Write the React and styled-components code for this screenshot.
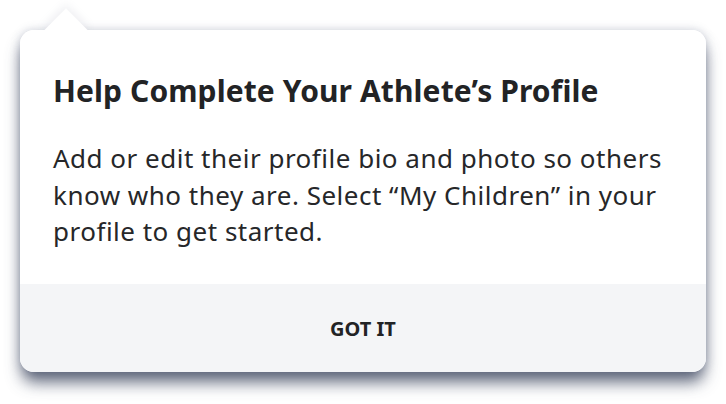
import React from 'react';
import styled, { createGlobalStyle } from 'styled-components';

const GlobalStyle = createGlobalStyle`
  html, body {
    margin: 0;
    padding: 0;
    background: #ffffff;
    font-family: "Noto Sans", "Open Sans", sans-serif;
  }
`;

const Page = styled.div`
  width: 726px;
  height: 404px;
  padding: 30px 20px 0 20px;
  box-sizing: border-box;
`;

const Popover = styled.div`
  position: relative;
  width: 686px;
  height: 342px;
  display: flex;
  flex-direction: column;
  background: #ffffff;
  border-radius: 14px;
  box-shadow: 0 12px 16px -2px rgba(55, 65, 90, 0.8),
    0 0 10px rgba(100, 110, 140, 0.3);

  &::before {
    content: '';
    position: absolute;
    top: -15px;
    left: 30px;
    width: 32px;
    height: 32px;
    background: #ffffff;
    transform: rotate(45deg);
    box-shadow: -3px -3px 8px rgba(120, 130, 160, 0.12);
  }
`;

const Body = styled.div`
  position: relative;
  flex: 1;
  padding: 41px 33px 0 33px;
  border-radius: 14px 14px 0 0;
  background: #ffffff;
  color: #222325;
`;

const Title = styled.h2`
  margin: 0 0 29px 0;
  font-size: 30px;
  line-height: 40px;
  font-weight: 700;
  letter-spacing: 0.1px;
`;

const Text = styled.p`
  margin: 0;
  font-size: 26px;
  line-height: 36.5px;
  font-weight: 400;
  letter-spacing: 0.5px;
  color: #262729;
`;

const Footer = styled.button`
  height: 88px;
  border: none;
  border-radius: 0 0 14px 14px;
  background: #f4f5f7;
  color: #222325;
  font-family: inherit;
  font-size: 20px;
  font-weight: 700;
  display: flex;
  align-items: center;
  justify-content: center;
  cursor: pointer;
`;

const App = () => (
  <>
    <GlobalStyle />
    <Page>
      <Popover>
        <Body>
          <Title>Help Complete Your Athlete’s Profile</Title>
          <Text>
            Add or edit their profile bio and photo so others know who they are.
            Select “My Children” in your profile to get started.
          </Text>
        </Body>
        <Footer>GOT IT</Footer>
      </Popover>
    </Page>
  </>
);

export default App;
